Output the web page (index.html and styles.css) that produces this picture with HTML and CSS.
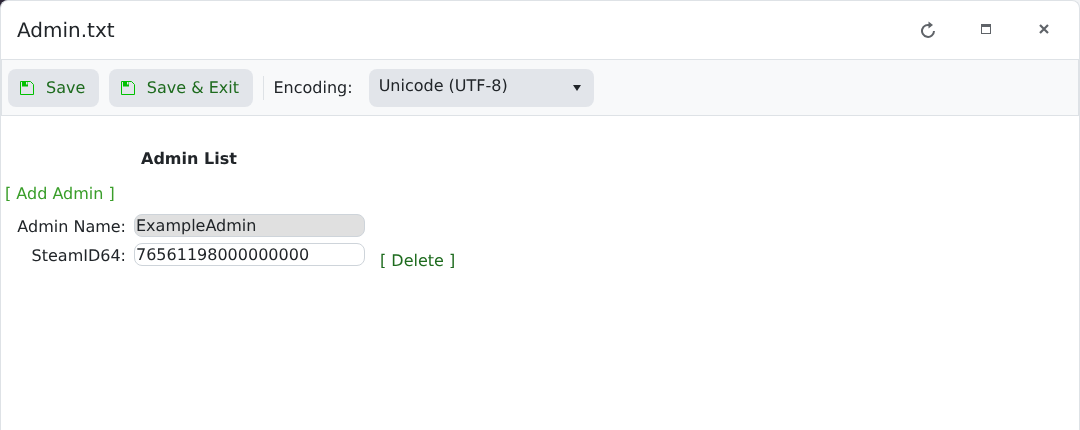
FILE: index.html
```html
<!DOCTYPE html>
<html lang="en">
  <head>
    <meta charset="UTF-8" />
    <title>Admin.txt</title>
    <link rel="stylesheet" href="styles.css">
  </head>
  <body>
    <div class="modal">
      <div class="modal-header">
        <h5 class="modal-title">Admin.txt</h5>
        <div class="window-btns">
          <button class="window-btn">
            <svg width="16" height="17" viewBox="0 0 16 17"><path d="M10.600 4.500A6 6 0 1 0 14 10" fill="none" stroke="#5f6368" stroke-width="2"/><path d="M8.500 0.500l4.500 3.500-4.500 3.500z" fill="#5f6368"/></svg>
          </button>
          <button class="window-btn">
            <svg width="10" height="10" viewBox="0 0 10 10"><rect x="0.500" y="0.500" width="9" height="9" fill="none" stroke="#5f6368"/><rect x="0" y="0" width="10" height="3" fill="#5f6368"/></svg>
          </button>
          <button class="window-btn">
            <svg width="10" height="10" viewBox="0 0 10 10"><path d="M1 1l8 8M9 1l-8 8" fill="none" stroke="#5f6368" stroke-width="2.200"/></svg>
          </button>
        </div>
      </div>
      <div class="toolbar">
        <button class="tool-btn">
          <svg class="save-icon" width="14" height="14" viewBox="0 0 14 14"><path d="M0.500 0.500h10l3 3v10h-13z" fill="none" stroke="#00c000"/><path d="M2 1h6v4.500h-6z" fill="#00c000"/><rect x="6" y="1" width="1.500" height="2.500" fill="#e2e5ea"/></svg>
          <span>Save</span>
        </button>
        <button class="tool-btn">
          <svg class="save-icon" width="14" height="14" viewBox="0 0 14 14"><path d="M0.500 0.500h10l3 3v10h-13z" fill="none" stroke="#00c000"/><path d="M2 1h6v4.500h-6z" fill="#00c000"/><rect x="6" y="1" width="1.500" height="2.500" fill="#e2e5ea"/></svg>
          <span>Save &amp; Exit</span>
        </button>
        <div class="divider"></div>
        <label class="encoding-label">Encoding:</label>
        <div class="select">
          <span>Unicode (UTF-8)</span>
          <i class="caret"></i>
        </div>
      </div>
      <div class="content">
        <h4 class="list-title">Admin List</h4>
        <a class="add-link">[ Add Admin ]</a>
        <div class="admin-row">
          <div class="fields">
            <label>Admin Name:</label>
            <input type="text" class="readonly" value="ExampleAdmin" readonly />
            <label>SteamID64:</label>
            <input type="text" value="76561198000000000" />
          </div>
          <a class="delete-link">[ Delete ]</a>
        </div>
      </div>
    </div>
  </body>
</html>
```

FILE: styles.css
```css
html, body {
  margin: 0;
  height: 100%;
  overflow: hidden;
}
body {
  background: linear-gradient(to right, #2b2536 50%, #f1f3f5 50%);
  font-family: "DejaVu Sans", sans-serif;
  font-size: 16px;
  color: #212529;
  text-rendering: geometricPrecision;
}
.modal {
  background-color: white;
  height: 430px;
  border: 1px solid #dee2e6;
  border-bottom: none;
  border-radius: 8px 8px 0 0;
  box-sizing: border-box;
  will-change: transform;
}
.modal-header {
  height: 58px;
  box-sizing: border-box;
  display: flex;
  align-items: center;
  justify-content: space-between;
  padding: 0 6px 0 16px;
}
.modal-title {
  margin: 0;
  font-size: 20px;
  font-weight: normal;
}
.window-btns {
  display: flex;
  padding-bottom: 2px;
}
.window-btn {
  width: 58px;
  height: 40px;
  padding: 0;
  border: none;
  background: none;
  display: flex;
  align-items: center;
  justify-content: center;
}
.toolbar {
  height: 57px;
  box-sizing: border-box;
  display: flex;
  align-items: center;
  padding: 0 0 0 6px;
  background-color: #f8f9fa;
  border: 1px solid #dee2e6;
}
.tool-btn {
  height: 38px;
  display: flex;
  align-items: center;
  gap: 12px;
  padding: 0 13.500px 0 12px;
  margin-right: 10px;
  font-family: inherit;
  font-size: 16px;
  text-rendering: inherit;
  color: #1e6b1e;
  background-color: #e2e5ea;
  border: none;
  border-radius: 8px;
}
.save-icon {
  flex: none;
}
.divider {
  width: 1px;
  height: 24px;
  background-color: #dee2e6;
}
.encoding-label {
  margin: 0 16px 0 10px;
}
.select {
  width: 225px;
  height: 38px;
  box-sizing: border-box;
  padding: 0 13px 4px 10px;
  display: flex;
  align-items: center;
  justify-content: space-between;
  background-color: #e2e5ea;
  border-radius: 8px;
}
.caret {
  border-left: 4px solid transparent;
  border-right: 4px solid transparent;
  border-top: 6px solid #212529;
  margin-top: 4px;
}
.content {
  padding: 33px 4px 0;
}
.list-title {
  margin: 0 0 16px 136px;
  font-size: 16px;
  font-weight: bold;
  line-height: 19px;
}
.add-link {
  display: block;
  line-height: 19px;
  color: #3a9e2a;
}
.admin-row {
  display: flex;
  align-items: flex-end;
  margin-top: 11px;
}
.fields {
  display: grid;
  grid-template-columns: 121px 231px;
  column-gap: 8px;
  row-gap: 6px;
  align-items: center;
}
.fields label {
  text-align: right;
  padding-top: 2px;
}
.fields input {
  width: 231px;
  height: 23px;
  box-sizing: border-box;
  padding: 0 1px;
  font-family: inherit;
  font-size: 16px;
  text-rendering: inherit;
  color: #212529;
  background-color: white;
  border: 1px solid #ced4da;
  border-radius: 8px;
  outline: none;
}
.fields input.readonly {
  background-color: #e0e0e0;
}
.delete-link {
  margin-left: 15px;
  line-height: 19px;
  margin-bottom: -4px;
  color: #1e6b1e;
}
```
